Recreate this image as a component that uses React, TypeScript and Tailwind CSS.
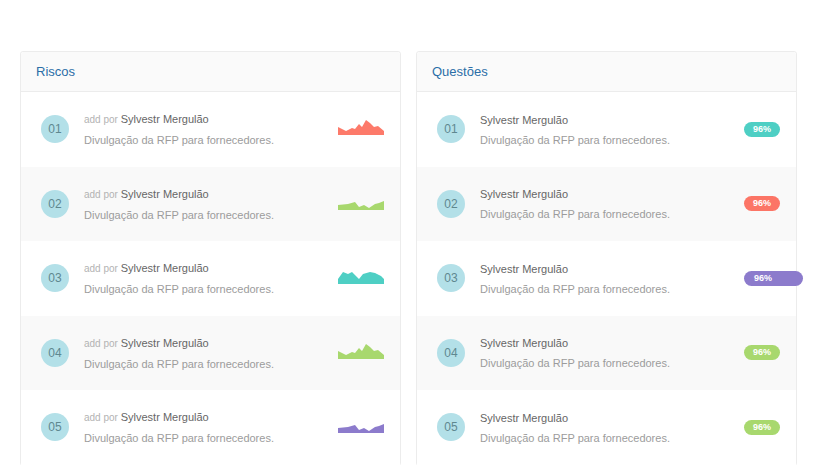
import React from 'react';

type Spark = { color: string; points: [number, number][] };

const sparkA: [number, number][] = [[0, 7], [8, 11], [14, 8], [17, 9], [21, 4], [24, 7], [28, 0], [32, 3], [36, 7], [40, 6], [46, 11]];
const sparkB: [number, number][] = [[0, 10], [10, 9], [17, 7], [21, 12], [26, 10], [31, 13], [37, 9], [41, 8], [46, 6]];
const sparkC: [number, number][] = [[0, 10], [5, 3], [10, 5], [14, 3], [21, 10], [25, 5], [32, 3], [37, 4], [43, 7], [46, 10]];

const riscos: Spark[] = [
  { color: '#fd7a6a', points: sparkA },
  { color: '#a8d86e', points: sparkB },
  { color: '#4ecfc4', points: sparkC },
  { color: '#a8d86e', points: sparkA },
  { color: '#8c7bcc', points: sparkB }
];

const questoes = [
  { color: '#4ecfc4', wide: false },
  { color: '#fc7566', wide: false },
  { color: '#8c7bcc', wide: true },
  { color: '#a8d86e', wide: false },
  { color: '#a8d86e', wide: false }
];

const Sparkline = ({ color, points }: Spark) => {
  const top = points.map(([x, y]) => `${x},${y}`).join(' L');
  const d = `M0,15 L${top} L46,15 Z`;
  return <svg width="46" height="15" viewBox="0 0 46 15" className="block">
      <path d={d} fill={color} />
    </svg>;
};

const Circle = ({ n }: { n: number }) => <div className="w-[28px] h-[28px] rounded-full bg-[#b3e0e8] text-[#5f8890] text-[12px] flex items-center justify-center flex-none">
    0{n}
  </div>;

const Panel = ({ title, children }: { title: string; children: React.ReactNode }) => <div className="border border-[#ececec] rounded-[3px] bg-white">
    <div className="h-[40px] bg-[#fafafa] border-b border-[#ececec] rounded-t-[3px] flex items-center px-[15px]">
      <span className="text-[13px] text-[#2b6ea7]">{title}</span>
    </div>
    {children}
  </div>;

const Row = ({ i, children }: { i: number; children: React.ReactNode }) => <div className={`h-[74.5px] flex items-center pl-[20px] pr-[16px] ${i % 2 === 1 ? 'bg-[#f9f9f9]' : 'bg-white'}`}>
    {children}
  </div>;

export default function App() {
  return <div className="min-h-screen bg-white pt-[51px] pl-[20px] grid grid-cols-[381px_381px] gap-[15px] items-start" style={{ fontFamily: '"Liberation Sans", Arial, sans-serif' }}>
      <Panel title="Riscos">
        {riscos.map((s, i) => <Row key={i} i={i}>
            <Circle n={i + 1} />
            <div className="ml-[15px] flex-1 min-w-0 mt-[1px]">
              <div className="text-[11px] leading-[20px] text-[#666]">
                <span className="text-[10px] text-[#b3b3b3]">add por </span>Sylvestr Mergulão
              </div>
              <div className="text-[11px] leading-[20px] text-[#9c9c9c]">Divulgação da RFP para fornecedores.</div>
            </div>
            <div className="-mt-[3px]">
              <Sparkline {...s} />
            </div>
          </Row>)}
      </Panel>
      <Panel title="Questões">
        {questoes.map((q, i) => <Row key={i} i={i}>
            <Circle n={i + 1} />
            <div className="ml-[15px] flex-1 min-w-0 mt-[1px]">
              <div className="text-[11px] leading-[20px] text-[#666]">Sylvestr Mergulão</div>
              <div className="text-[11px] leading-[20px] text-[#9c9c9c]">Divulgação da RFP para fornecedores.</div>
            </div>
            <div className="w-[36px] flex-none">
              <div className={`h-[15px] rounded-full flex items-center text-white text-[9px] font-bold ${q.wide ? 'w-[59px] pl-[10px]' : 'w-[36px] justify-center'}`} style={{ backgroundColor: q.color }}>
                96%
              </div>
            </div>
          </Row>)}
      </Panel>
    </div>;
}
